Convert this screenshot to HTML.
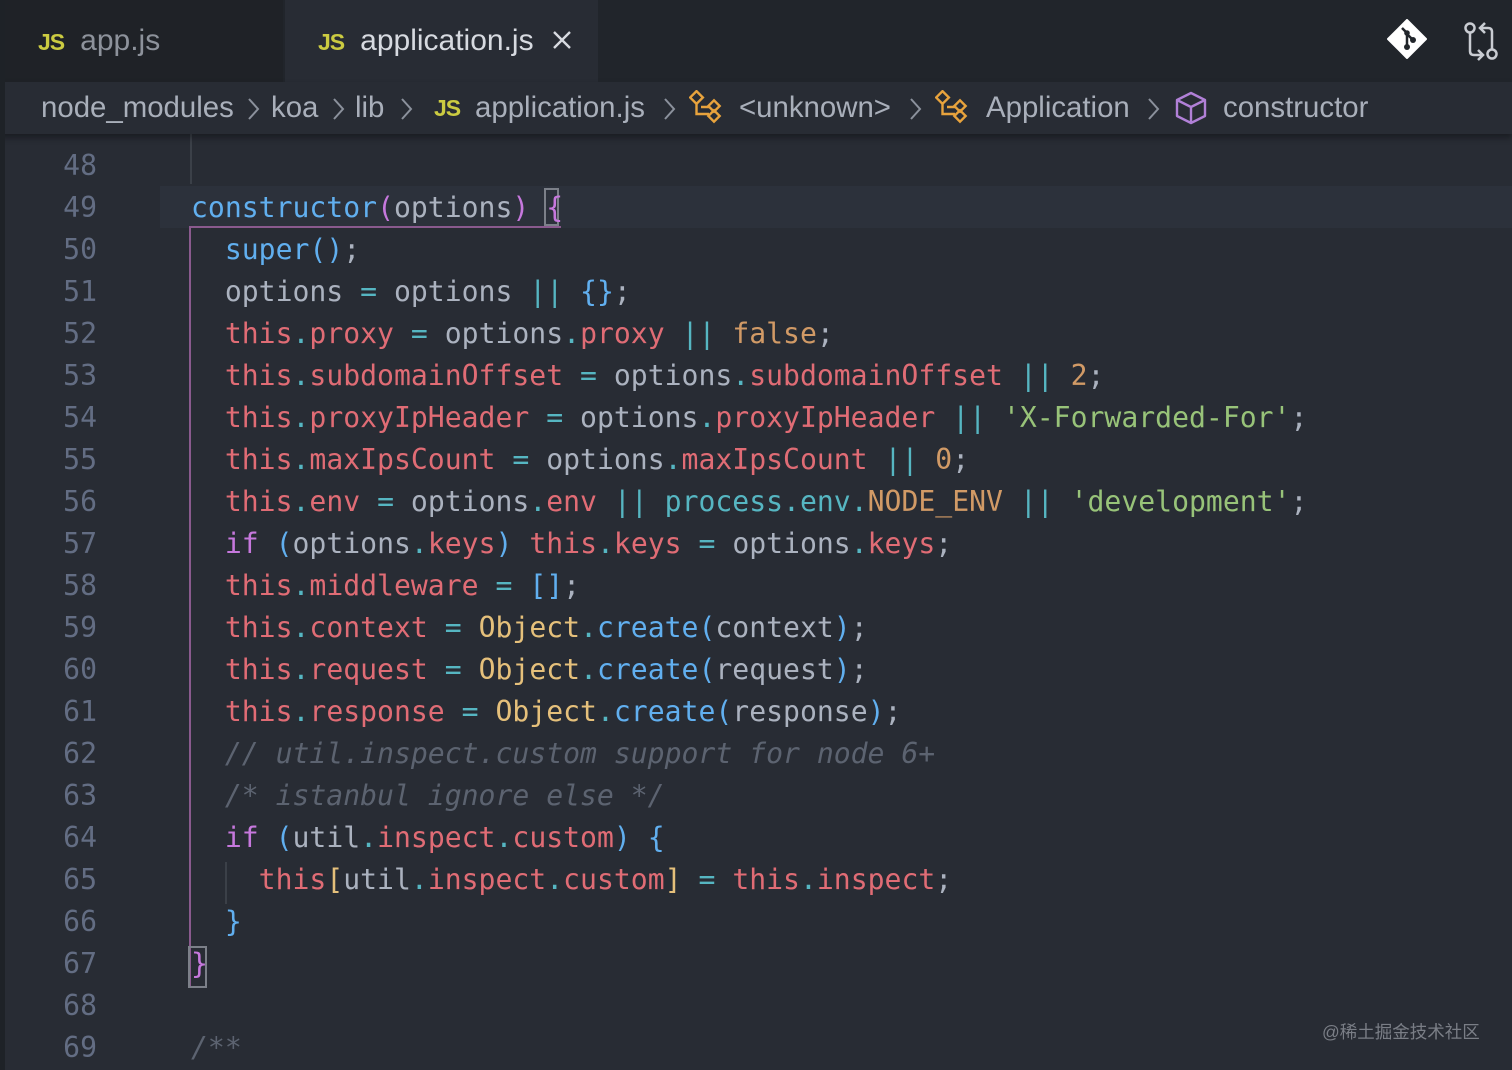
<!DOCTYPE html>
<html><head><meta charset="utf-8">
<style>
html,body{margin:0;padding:0;}
body{width:1512px;height:1070px;background:#282c34;position:relative;overflow:hidden;font-family:"Liberation Sans","Noto Sans CJK SC",sans-serif;}
.tabbar{position:absolute;left:0;top:0;width:1512px;height:82px;background:#21252b;}
.tab{position:absolute;top:0;height:82px;font-size:30px;line-height:82px;}
.js{color:#cbcb41;font-weight:bold;font-size:23px;margin-right:16px;letter-spacing:-1px;}
.bc{position:absolute;left:0;top:82px;width:1512px;height:52px;background:#282c34;box-shadow:0 4px 6px rgba(0,0,0,0.35);z-index:3;font-size:29.4px;color:#a9afba;line-height:52px;white-space:nowrap;}
.bc span{position:absolute;top:0;}
.bc .js{font-size:23px;}
.chev{position:absolute;top:16px;}
.code{position:absolute;left:0;top:1px;font-family:"DejaVu Sans Mono","Liberation Mono",monospace;font-size:28.1px;}
.ln{position:absolute;left:0;width:97px;text-align:right;color:#636d83;height:42px;line-height:42px;}
.l{position:absolute;left:191px;white-space:pre;height:42px;line-height:42px;color:#abb2bf;}
.r{color:#e06c75}.c{color:#56b6c2}.o{color:#d19a66}.g{color:#98c379}.p{color:#c678dd}.b{color:#61afef}.y{color:#e5c07b}.k{color:#5c6370;font-style:italic}.w{color:#e5c07b}
</style></head><body>
<div style="position:absolute;left:0;top:0;width:5px;height:1070px;background:#1e2227;z-index:5"></div>
<div class="tabbar">
  <div class="tab" style="left:5px;width:278px;background:#1f2227;"><span style="position:absolute;left:33px;"><span class="js">JS</span><span style="color:#8d929b">app.js</span></span></div>
  <div class="tab" style="left:285px;width:313px;background:#282c34;"><span style="position:absolute;left:33px;"><span class="js">JS</span><span style="color:#d7dae0">application.js</span></span>
    <svg style="position:absolute;left:267px;top:30px" width="20" height="20" viewBox="0 0 20 20"><path d="M2 2L18 18M18 2L2 18" stroke="#d7dae0" stroke-width="2.4"/></svg></div>
  <svg style="position:absolute;left:1387px;top:19px" width="40" height="40" viewBox="0 0 40 40"><path d="M20 1L39 20L20 39L1 20Z" fill="#fff" stroke="#fff" stroke-width="2" stroke-linejoin="round"/><path d="M15 9L20 14V27M20 15L26 21" stroke="#21252b" stroke-width="2.5" fill="none"/><circle cx="20" cy="14" r="2.8" fill="#21252b"/><circle cx="20" cy="28" r="3" fill="#21252b"/><circle cx="26" cy="21" r="3" fill="#21252b"/></svg>
  <svg style="position:absolute;left:1464px;top:20px" width="36" height="42" viewBox="0 0 36 42"><circle cx="6" cy="8" r="4.5" fill="none" stroke="#c9ccd2" stroke-width="2.5"/><path d="M6 13V31Q6 35 10 35H18M14 30L19 35L14 40" fill="none" stroke="#c9ccd2" stroke-width="2.5"/><circle cx="28" cy="34" r="4.5" fill="none" stroke="#c9ccd2" stroke-width="2.5"/><path d="M28 29V12Q28 8 24 8H17M21 3L16 8L21 13" fill="none" stroke="#c9ccd2" stroke-width="2.5"/></svg>
</div>
<div class="bc">
  <span style="left:41px">node_modules</span>
  <svg class="chev" style="left:248px" width="12" height="22" viewBox="0 0 12 22"><path d="M1 1L10 11L1 21" fill="none" stroke="#8b919c" stroke-width="2"/></svg>
  <span style="left:271px">koa</span>
  <svg class="chev" style="left:333px" width="12" height="22" viewBox="0 0 12 22"><path d="M1 1L10 11L1 21" fill="none" stroke="#8b919c" stroke-width="2"/></svg>
  <span style="left:355px">lib</span>
  <svg class="chev" style="left:401px" width="12" height="22" viewBox="0 0 12 22"><path d="M1 1L10 11L1 21" fill="none" stroke="#8b919c" stroke-width="2"/></svg>
  <span style="left:434px"><span class="js">JS</span></span><span style="left:475px">application.js</span>
  <svg class="chev" style="left:664px" width="12" height="22" viewBox="0 0 12 22"><path d="M1 1L10 11L1 21" fill="none" stroke="#8b919c" stroke-width="2"/></svg>
  <svg style="position:absolute;left:689px;top:8px" width="36" height="34" viewBox="0 0 36 34"><g fill="none" stroke="#e8a33d" stroke-width="2.4"><rect x="3" y="3" width="9" height="9" transform="rotate(45 7.5 7.5)"/><path d="M7.5 12V24H20M12 17H20"/><rect x="21" y="12" width="8" height="8" transform="rotate(45 25 16)"/><rect x="21" y="22" width="8" height="8" transform="rotate(45 25 26)"/></g></svg>
  <span style="left:739px">&lt;unknown&gt;</span>
  <svg class="chev" style="left:910px" width="12" height="22" viewBox="0 0 12 22"><path d="M1 1L10 11L1 21" fill="none" stroke="#8b919c" stroke-width="2"/></svg>
  <svg style="position:absolute;left:935px;top:8px" width="36" height="34" viewBox="0 0 36 34"><g fill="none" stroke="#e8a33d" stroke-width="2.4"><rect x="3" y="3" width="9" height="9" transform="rotate(45 7.5 7.5)"/><path d="M7.5 12V24H20M12 17H20"/><rect x="21" y="12" width="8" height="8" transform="rotate(45 25 16)"/><rect x="21" y="22" width="8" height="8" transform="rotate(45 25 26)"/></g></svg>
  <span style="left:986px">Application</span>
  <svg class="chev" style="left:1148px" width="12" height="22" viewBox="0 0 12 22"><path d="M1 1L10 11L1 21" fill="none" stroke="#8b919c" stroke-width="2"/></svg>
  <svg style="position:absolute;left:1174px;top:9px" width="34" height="34" viewBox="0 0 34 34"><g fill="none" stroke="#b180d7" stroke-width="2.4" stroke-linejoin="round"><path d="M17 2L31 9V25L17 32L3 25V9Z"/><path d="M3 9L17 16L31 9M17 16V32"/></g></svg>
  <span style="left:1223px">constructor</span>
</div>
<div style="position:absolute;left:160px;top:186px;width:1352px;height:42px;background:#2c313b;"></div>
<div style="position:absolute;left:190px;top:134px;width:2px;height:50px;background:#3b4048"></div>
<div style="position:absolute;left:189px;top:228px;width:2px;height:758px;background:#8a5a8e"></div>
<div style="position:absolute;left:189px;top:226px;width:372px;height:2px;background:#8a5a8e"></div>
<div style="position:absolute;left:225px;top:862px;width:2px;height:42px;background:#3b4048"></div>
<div style="position:absolute;left:544px;top:188px;width:15px;height:38px;border:2px solid #7c8089;box-sizing:border-box"></div>
<div style="position:absolute;left:188px;top:946px;width:19px;height:42px;border:2px solid #7c8089;box-sizing:border-box"></div>
<div class="code">
<div class="ln" style="top:144px">48</div>
<div class="ln" style="top:186px">49</div>
<div class="ln" style="top:228px">50</div>
<div class="ln" style="top:270px">51</div>
<div class="ln" style="top:312px">52</div>
<div class="ln" style="top:354px">53</div>
<div class="ln" style="top:396px">54</div>
<div class="ln" style="top:438px">55</div>
<div class="ln" style="top:480px">56</div>
<div class="ln" style="top:522px">57</div>
<div class="ln" style="top:564px">58</div>
<div class="ln" style="top:606px">59</div>
<div class="ln" style="top:648px">60</div>
<div class="ln" style="top:690px">61</div>
<div class="ln" style="top:732px">62</div>
<div class="ln" style="top:774px">63</div>
<div class="ln" style="top:816px">64</div>
<div class="ln" style="top:858px">65</div>
<div class="ln" style="top:900px">66</div>
<div class="ln" style="top:942px">67</div>
<div class="ln" style="top:984px">68</div>
<div class="ln" style="top:1026px">69</div>
<div class="l" style="top:186px"><span class="b">constructor</span><span class="p">(</span>options<span class="p">)</span> <span class="p">{</span></div>
<div class="l" style="top:228px">  <span class="b">super</span><span class="b">()</span>;</div>
<div class="l" style="top:270px">  options <span class="c">=</span> options <span class="c">||</span> <span class="b">{}</span>;</div>
<div class="l" style="top:312px">  <span class="r">this</span><span class="c">.</span><span class="r">proxy</span> <span class="c">=</span> options<span class="c">.</span><span class="r">proxy</span> <span class="c">||</span> <span class="o">false</span>;</div>
<div class="l" style="top:354px">  <span class="r">this</span><span class="c">.</span><span class="r">subdomainOffset</span> <span class="c">=</span> options<span class="c">.</span><span class="r">subdomainOffset</span> <span class="c">||</span> <span class="o">2</span>;</div>
<div class="l" style="top:396px">  <span class="r">this</span><span class="c">.</span><span class="r">proxyIpHeader</span> <span class="c">=</span> options<span class="c">.</span><span class="r">proxyIpHeader</span> <span class="c">||</span> <span class="g">'X-Forwarded-For'</span>;</div>
<div class="l" style="top:438px">  <span class="r">this</span><span class="c">.</span><span class="r">maxIpsCount</span> <span class="c">=</span> options<span class="c">.</span><span class="r">maxIpsCount</span> <span class="c">||</span> <span class="o">0</span>;</div>
<div class="l" style="top:480px">  <span class="r">this</span><span class="c">.</span><span class="r">env</span> <span class="c">=</span> options<span class="c">.</span><span class="r">env</span> <span class="c">||</span> <span class="c">process.env.</span><span class="o">NODE_ENV</span> <span class="c">||</span> <span class="g">'development'</span>;</div>
<div class="l" style="top:522px">  <span class="p">if</span> <span class="b">(</span>options<span class="c">.</span><span class="r">keys</span><span class="b">)</span> <span class="r">this</span><span class="c">.</span><span class="r">keys</span> <span class="c">=</span> options<span class="c">.</span><span class="r">keys</span>;</div>
<div class="l" style="top:564px">  <span class="r">this</span><span class="c">.</span><span class="r">middleware</span> <span class="c">=</span> <span class="b">[]</span>;</div>
<div class="l" style="top:606px">  <span class="r">this</span><span class="c">.</span><span class="r">context</span> <span class="c">=</span> <span class="y">Object</span><span class="c">.</span><span class="b">create</span><span class="b">(</span>context<span class="b">)</span>;</div>
<div class="l" style="top:648px">  <span class="r">this</span><span class="c">.</span><span class="r">request</span> <span class="c">=</span> <span class="y">Object</span><span class="c">.</span><span class="b">create</span><span class="b">(</span>request<span class="b">)</span>;</div>
<div class="l" style="top:690px">  <span class="r">this</span><span class="c">.</span><span class="r">response</span> <span class="c">=</span> <span class="y">Object</span><span class="c">.</span><span class="b">create</span><span class="b">(</span>response<span class="b">)</span>;</div>
<div class="l" style="top:732px">  <span class="k">// util.inspect.custom support for node 6+</span></div>
<div class="l" style="top:774px">  <span class="k">/* istanbul ignore else */</span></div>
<div class="l" style="top:816px">  <span class="p">if</span> <span class="b">(</span>util<span class="c">.</span><span class="r">inspect</span><span class="c">.</span><span class="r">custom</span><span class="b">)</span> <span class="b">{</span></div>
<div class="l" style="top:858px">    <span class="r">this</span><span class="w">[</span>util<span class="c">.</span><span class="r">inspect</span><span class="c">.</span><span class="r">custom</span><span class="w">]</span> <span class="c">=</span> <span class="r">this</span><span class="c">.</span><span class="r">inspect</span>;</div>
<div class="l" style="top:900px">  <span class="b">}</span></div>
<div class="l" style="top:942px"><span class="p">}</span></div>
<div class="l" style="top:1026px"><span class="k">/**</span></div>
</div>
<div style="position:absolute;left:1322px;top:1019px;font-size:17.5px;color:#7a7e86;font-family:'Liberation Sans','Noto Sans CJK SC',sans-serif;">@稀土掘金技术社区</div>
</body></html>
